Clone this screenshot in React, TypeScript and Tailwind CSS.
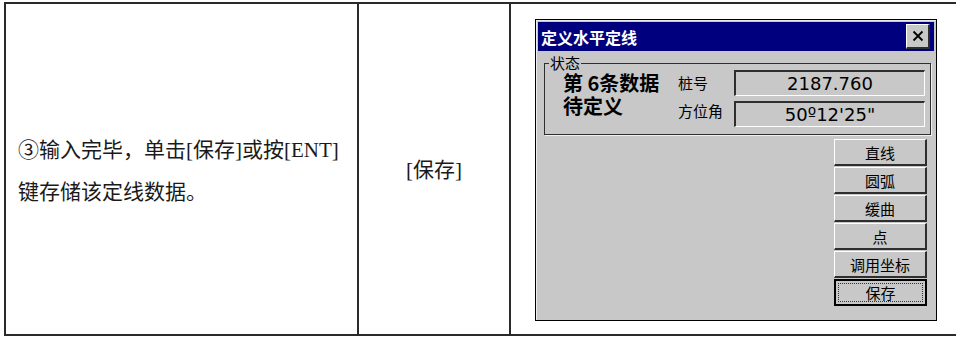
import React from 'react'

const cjk = '"Noto Sans CJK SC", sans-serif'
const serifCjk = '"Liberation Serif", "Noto Sans CJK SC", serif'

const buttons = ['直线', '圆弧', '缓曲', '点', '调用坐标']

const WinButton: React.FC<{ label: string }> = ({ label }) => (
  <div
    className="w-[93px] h-[27px] flex items-center justify-center bg-[#c8c8c8] border-t border-l border-b-2 border-r-2 border-t-white border-l-white border-b-[#2e2e2e] border-r-[#2e2e2e] text-[15px] text-black leading-none"
    style={{ fontFamily: cjk }}
  >
    {label}
  </div>
)

const Field: React.FC<{ value: string }> = ({ value }) => (
  <div
    className="h-[26px] w-[191px] flex items-center justify-center bg-[#c8c8c8] border-t-2 border-l-2 border-b border-r border-t-[#2e2e2e] border-l-[#2e2e2e] border-b-white border-r-white text-[18px] text-black leading-none"
    style={{ fontFamily: '"DejaVu Sans", sans-serif' }}
  >
    {value}
  </div>
)

const Dialog: React.FC = () => (
  <div className="w-[402px] h-[302px] border border-black bg-[#c8c8c8] p-[2px] shadow-[inset_1px_1px_0_#ececec]">
    {/* Title bar */}
    <div className="h-[29px] bg-[#00007e] flex items-center justify-between pl-[3px] pr-[4px]">
      <span className="text-white font-bold text-[16px] leading-none" style={{ fontFamily: cjk }}>
        定义水平定线
      </span>
      <div className="w-[24px] h-[25px] bg-[#c8c8c8] flex items-center justify-center border-t border-l border-b-2 border-r-2 border-t-white border-l-white border-b-[#2e2e2e] border-r-[#2e2e2e]">
        <svg width="12" height="12" viewBox="0 0 12 12">
          <path d="M1.5 1.5 L10.5 10.5 M10.5 1.5 L1.5 10.5" stroke="#000" strokeWidth="1.8" />
        </svg>
      </div>
    </div>

    {/* Status group */}
    <div className="relative mt-[12px] ml-[6px] w-[387px] h-[72px] border border-[#2e2e2e] shadow-[1px_1px_0_#f0f0f0] flex">
      <span
        className="absolute left-[4px] top-[-8px] bg-[#c8c8c8] px-[1px] text-[15px] leading-[14px] text-black"
        style={{ fontFamily: cjk }}
      >
        状态
      </span>
      <div
        className="w-[133px] pl-[18px] pt-[9px] flex flex-col gap-[3px] text-[20px] font-bold leading-[20px] text-black"
        style={{ fontFamily: cjk }}
      >
        <div>第 6条数据</div>
        <div>待定义</div>
      </div>
      <div className="w-[56px] pt-[6px] flex flex-col text-[15px] text-black" style={{ fontFamily: cjk }}>
        <div className="h-[26px] flex items-center">桩号</div>
        <div className="h-[26px] flex items-center mt-[2px]">方位角</div>
      </div>
      <div className="pt-[6px] flex flex-col gap-[5px]">
        <Field value="2187.760" />
        <Field value={'50º12\'25"'} />
      </div>
    </div>

    {/* Buttons */}
    <div className="mt-[4px] pr-[7px] flex flex-col items-end gap-[1px]">
      {buttons.map(b => (
        <WinButton key={b} label={b} />
      ))}
      <div className="w-[93px] h-[27px] bg-[#c8c8c8] border-2 border-black p-[2px] flex">
        <div
          className="flex-1 border border-dotted border-[#333] flex items-center justify-center text-[15px] text-black leading-none"
          style={{ fontFamily: cjk }}
        >
          保存
        </div>
      </div>
    </div>
  </div>
)

export default function App() {
  return (
    <div className="w-[956px] h-[337px] bg-white overflow-hidden">
      <div className="ml-[4px] mt-[2px] w-[952px] h-[334px] flex border-l-2 border-t-2 border-b-2 border-[#2a2a2a]">
        <div
          className="w-[353px] shrink-0 border-r-2 border-[#2a2a2a] flex flex-col justify-center pl-[12px] pt-[4px] text-[21px] leading-[42px] text-[#1a1a1a]"
          style={{ fontFamily: serifCjk }}
        >
          <div>③输入完毕，单击[保存]或按[ENT]</div>
          <div>键存储该定线数据。</div>
        </div>
        <div
          className="w-[152px] shrink-0 border-r-2 border-[#2a2a2a] flex items-center justify-center pt-[4px] text-[21px] text-[#1a1a1a]"
          style={{ fontFamily: serifCjk }}
        >
          [保存]
        </div>
        <div className="flex-1 pl-[24px] pt-[15px]">
          <Dialog />
        </div>
      </div>
    </div>
  )
}
